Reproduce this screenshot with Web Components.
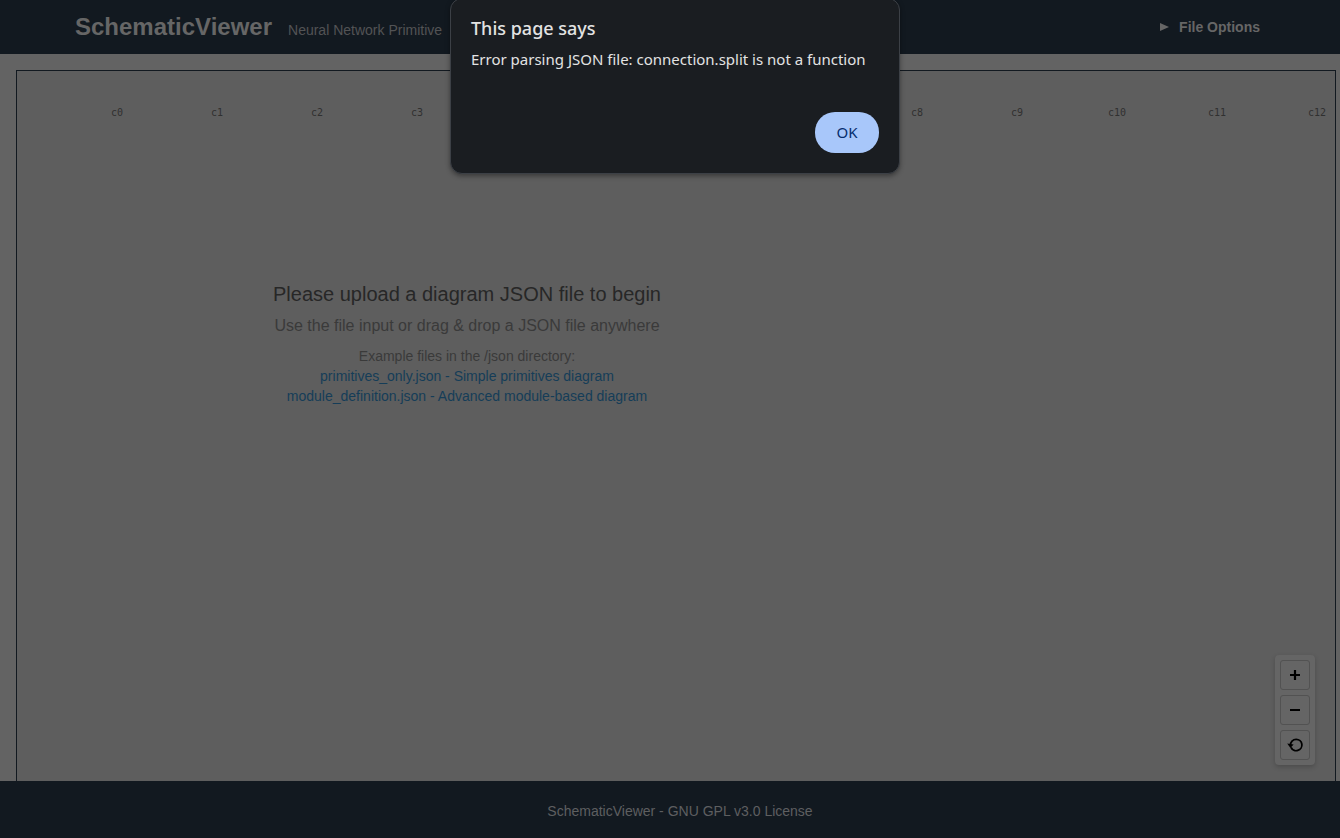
<!DOCTYPE html>
<html lang="en">
<head>
<meta charset="utf-8">
<title>SchematicViewer</title>
<style>
  html, body { height: 100%; margin: 0; }
  body { font-family: "Liberation Sans", Arial, sans-serif; background: #636363; overflow: hidden; }
</style>
</head>
<body>
<schematic-app></schematic-app>
<script>
const define = (name, html, setup) => customElements.define(name, class extends HTMLElement {
  constructor() {
    super();
    this.attachShadow({ mode: 'open' }).innerHTML = html;
    if (setup) setup(this.shadowRoot, this);
  }
});

define('app-header', `
  <style>
    :host { display: flex; align-items: center; justify-content: space-between; box-sizing: border-box;
      height: 54px; padding: 0 80px 0 75px; background: #121920; color: #666; }
    .brand { display: flex; align-items: baseline; gap: 16px; }
    h1 { margin: 0; font-size: 24px; line-height: 28px; }
    p { margin: 0; font-size: 14px; color: #525355; }
    button { display: flex; align-items: center; gap: 10px; border: 0; padding: 0; background: none;
      color: #666; font: bold 14px/20px "Liberation Sans", Arial, sans-serif; }
    svg { display: block; }
  </style>
  <div class="brand"><h1><slot name="title"></slot></h1><p><slot name="tagline"></slot></p></div>
  <button type="button" aria-expanded="false">
    <svg width="9" height="8" viewBox="0 0 9 8" aria-hidden="true"><path d="M0 0 9 4 0 8Z" fill="currentColor"/></svg>
    <span>File Options</span>
  </button>`);

define('column-ruler', `
  <style>
    :host { display: flex; padding: 35px 0 0 50px; }
    span { flex: 0 0 100px; text-align: center; color: #303030; font: 10px/14px "DejaVu Sans Mono", monospace; }
  </style>`, root => {
  for (let i = 0; i < 13; i++) {
    const label = document.createElement('span');
    label.textContent = 'c' + i;
    root.append(label);
  }
});

define('upload-prompt', `
  <style>
    :host { display: block; max-width: 900px; margin-top: 159px; text-align: center; color: #3a3a3a; }
    h2 { margin: 0; color: #272727; font-size: 20px; font-weight: normal; line-height: 30px; }
    p { margin: 0; font-size: 16px; line-height: 34px; }
    .files { display: flex; flex-direction: column; align-items: center; margin-top: 3px; font-size: 14px; line-height: 20px; }
    a { color: #153d58; text-decoration: none; }
  </style>
  <h2>Please upload a diagram JSON file to begin</h2>
  <p>Use the file input or drag &amp; drop a JSON file anywhere</p>
  <div class="files">
    <span>Example files in the /json directory:</span>
    <a href="#primitives">primitives_only.json - Simple primitives diagram</a>
    <a href="#modules">module_definition.json - Advanced module-based diagram</a>
  </div>`);

define('zoom-controls', `
  <style>
    :host { display: flex; flex-direction: column; gap: 5px; padding: 5px; border-radius: 4px;
      background: #656565; box-shadow: 0 2px 5px rgba(0,0,0,.2); }
    button { display: grid; place-items: center; box-sizing: border-box; width: 30px; height: 30px; padding: 0;
      border: 1px solid #525252; border-radius: 3px; background: #656565; color: #000; }
    svg { display: block; }
  </style>
  <button type="button" aria-label="Zoom in"><svg width="16" height="16" viewBox="0 0 16 16"><path d="M3 8h10M8 3v10" stroke="#000" stroke-width="2.2"/></svg></button>
  <button type="button" aria-label="Zoom out"><svg width="16" height="16" viewBox="0 0 16 16"><path d="M3 8h10" stroke="#000" stroke-width="2"/></svg></button>
  <button type="button" aria-label="Reset view"><svg width="18" height="16" viewBox="0 0 18 16" fill="none"><path d="M4.4 8.5C4.2 4.8 7 2.3 10.2 2.3A5.7 5.7 0 1 1 5 10.3" stroke="#000" stroke-width="1.8"/><path d="M1.2 6.6 7.6 7.4 4.4 11Z" fill="#000"/></svg></button>`);

define('diagram-canvas', `
  <style>
    :host { display: block; position: relative; overflow: hidden; border: 1px solid #121920; border-bottom: 0; background: #5e5e5e; }
    zoom-controls { position: absolute; right: 20px; bottom: 16px; }
  </style>
  <column-ruler></column-ruler><upload-prompt></upload-prompt><zoom-controls></zoom-controls>`);

define('app-footer', `
  <style>
    :host { display: block; padding: 20px 0 17px 20px; background: #121920; color: #5e5f60;
      text-align: center; font-size: 14px; line-height: 20px; }
  </style><slot></slot>`);

define('alert-dialog', `
  <style>
    :host { display: block; }
    dialog { position: static; box-sizing: border-box; width: 450px; margin: 0; padding: 14px 20px 20px; border: 1px solid #3c4046; border-radius: 12px;
      background: #1a1d21; color: #e3e3e3; box-shadow: 0 2px 5px rgba(0,0,0,.4);
      font: 15px/20px "Noto Sans", "Open Sans", sans-serif; }
    h2 { margin: 0; font-size: 18px; font-weight: 500; line-height: 30px; }
    p { margin: 6px 0 0; white-space: nowrap; }
    form { display: flex; justify-content: flex-end; margin-top: 43px; }
    button { width: 64px; height: 41px; padding: 0 0 2px; border: 0; border-radius: 20px; background: #a8c7fa; color: #062e6f;
      font: 15px/20px "Noto Sans", "Open Sans", sans-serif; outline: 0; }
  </style>
  <dialog open aria-labelledby="heading">
    <h2 id="heading"><slot name="heading"></slot></h2>
    <p><slot></slot></p>
    <form method="dialog"><button>OK</button></form>
  </dialog>`);

define('schematic-app', `
  <style>
    :host { display: flex; flex-direction: column; position: relative; min-height: 100vh; }
    main { flex: 1; display: flex; padding: 16px 4px 0 16px; }
    diagram-canvas { flex: 1; min-width: 0; }
    alert-dialog { position: absolute; top: -2px; left: 50%; margin-left: -220px; }
  </style>
  <app-header><span slot="title">SchematicViewer</span><span slot="tagline">Neural Network Primitive</span></app-header>
  <main><diagram-canvas></diagram-canvas></main>
  <app-footer>SchematicViewer - GNU GPL v3.0 License</app-footer>
  <alert-dialog><span slot="heading">This page says</span>Error parsing JSON file: connection.split is not a function</alert-dialog>`);
</script>
</body>
</html>
